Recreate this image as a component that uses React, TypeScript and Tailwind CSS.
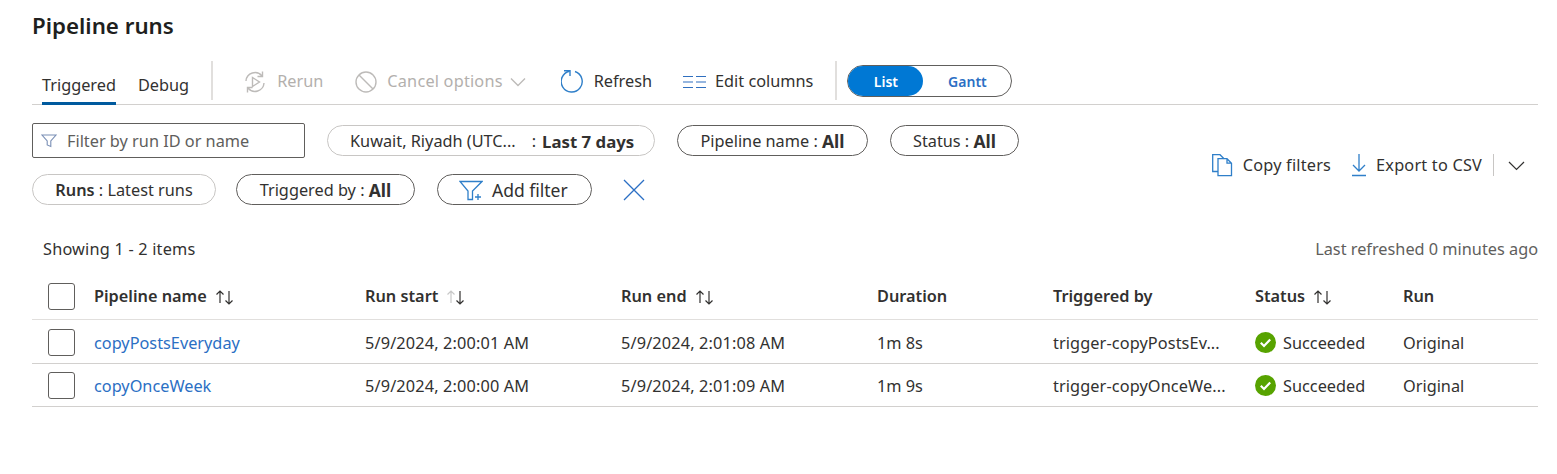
import React from 'react';

const font = { fontFamily: '"Noto Sans", "Open Sans", sans-serif' };

const SortIcon = ({ faded = false }: { faded?: boolean }) => (
  <svg className="ml-[7px]" width="22" height="18" viewBox="0 0 22 18" fill="none" strokeWidth="1.2">
    <path d="M6 15V3M2.5 6.5 6 3l3.5 3.5" stroke={faded ? '#c8c8c8' : '#323130'} />
    <path d="M15 3v13M11.5 12.5 15 16l3.5-3.5" stroke="#323130" />
  </svg>
);

const Pill = ({ children, light = false, className = '' }: { children: React.ReactNode; light?: boolean; className?: string }) => (
  <div
    className={`flex h-[31px] items-center rounded-full border bg-white pt-[2px] text-[16.3px] text-[#323130] ${
      light ? 'border-[#c8c6c4]' : 'border-[#605e5c]'
    } ${className}`}>
    {children}
  </div>
);

const Check = () => <div className="h-[27px] w-[27px] rounded-[3px] border border-[#605e5c] bg-white" />;

const SuccessIcon = () => (
  <svg width="21" height="21" viewBox="0 0 21 21">
    <circle cx="10.5" cy="10.5" r="10.5" fill="#57a300" />
    <path d="M5.8 10.8 9 14l6.2-6.6" fill="none" stroke="#fff" strokeWidth="2.2" />
  </svg>
);

const gridCols = 'grid grid-cols-[46px_271px_256px_256px_176px_202px_148px_135px] items-center pl-[16px]';

const runs = [
  { name: 'copyPostsEveryday', start: '5/9/2024, 2:00:01 AM', end: '5/9/2024, 2:01:08 AM', duration: '1m 8s', by: 'trigger-copyPostsEv...' },
  { name: 'copyOnceWeek', start: '5/9/2024, 2:00:00 AM', end: '5/9/2024, 2:01:09 AM', duration: '1m 9s', by: 'trigger-copyOnceWe...' }
];

const App = () => {
  return (
    <div className="h-[474px] w-[1557px] overflow-hidden bg-white pl-[32px] pr-[19px] text-[#323130]" style={font}>
      <h1 className="pt-[9px] text-[22.3px] font-semibold leading-[34px] text-[#201f1e]">Pipeline runs</h1>

      <div className="mt-[17px] flex h-[45px] items-stretch border-b border-[#d2d0ce] text-[16.3px]">
        <div className="flex items-end">
          <div className="-mb-px ml-[10px] flex h-[33px] items-center border-b-[3px] border-[#005a9e] pb-[4px] leading-none">
            Triggered
          </div>
          <div className="ml-[22px] flex h-[33px] items-center pb-[4px] leading-none">Debug</div>
        </div>
        <div className="ml-[22px] mt-[1px] h-[39px] w-[2px] bg-[#e1dfdd]" />

        <div className="ml-[30px] flex items-center pb-[1px] text-[#b3b0ad]">
          <svg width="24" height="24" viewBox="0 0 24 24" fill="none" stroke="#bdbbb9" strokeWidth="1.4">
            <path d="M3 11a9 9 0 0 1 16-5M21 13a9 9 0 0 1-16 5" />
            <path d="M19.5 1.5V6.5H14.5M4.5 22.5V17.5H9.5" />
            <path d="M9.5 7.5v9l7-4.5z" />
          </svg>
          <span className="ml-[10px]">Rerun</span>
        </div>
        <div className="ml-[32px] flex items-center pb-[1px] text-[#b3b0ad]">
          <svg width="22" height="22" viewBox="0 0 22 22" fill="none" stroke="#bdbbb9" strokeWidth="1.4">
            <circle cx="11" cy="11" r="10" />
            <path d="M4 4l14 14" />
          </svg>
          <span className="ml-[10px] tracking-[0.2px]">Cancel options</span>
          <svg className="ml-[7px]" width="16" height="16" viewBox="0 0 16 16" fill="none" stroke="#bdbbb9" strokeWidth="1.4">
            <path d="M1 4.5 8 11.5l7-7" />
          </svg>
        </div>
        <div className="ml-[35px] flex items-center pb-[1px]">
          <svg width="23" height="24" viewBox="0 0 23 24" fill="none" stroke="#2f7fc9" strokeWidth="1.4">
            <path d="M14 1.5A10.5 10.5 0 1 1 8.5 1.2" />
            <path d="M3 .7H9V6" />
          </svg>
          <span className="ml-[10px]">Refresh</span>
        </div>
        <div className="ml-[31px] flex items-center pb-[1px]">
          <svg width="23" height="14" viewBox="0 0 23 14" fill="none" stroke="#2f6fbf" strokeWidth="1.2">
            <path d="M0 1.5h10M13 1.5h10M0 7h10M13 7h10M0 12.5h10M13 12.5h10" />
          </svg>
          <span className="ml-[9px]">Edit columns</span>
        </div>
        <div className="ml-[22px] mt-[1px] h-[39px] w-[2px] bg-[#e1dfdd]" />
        <div className="ml-[10px] mt-[5px] flex h-[32px] w-[165px] items-center rounded-full border border-[#605e5c] text-[14px] font-semibold">
          <div className="flex h-full w-[75px] items-center justify-center rounded-full bg-[#0078d4] text-white">List</div>
          <div className="flex-1 text-center text-[#2b6fc4]">Gantt</div>
        </div>
      </div>

      <div className="mt-[18px] flex items-center justify-between">
        <div className="flex flex-col gap-[16px]">
          <div className="flex items-center">
            <div className="flex h-[35px] w-[273px] items-center rounded-[2px] border border-[#605e5c] pl-[8px] text-[16.3px] text-[#605e5c]">
              <svg width="16" height="16" viewBox="0 0 16 16" fill="none" stroke="#7a8fb5" strokeWidth="1.1">
                <path d="M1 2h14L9.8 8v5.5l-3.6-1.5V8z" />
              </svg>
              <span className="ml-[10px] pt-[2px]">Filter by run ID or name</span>
            </div>
            <Pill light className="ml-[22px] w-[328px] pl-[22px]">
              <span>Kuwait, Riyadh (UTC...</span>
              <span className="ml-[16px]">:</span>
              <span className="ml-[6px] text-[16.8px] font-bold">Last 7 days</span>
            </Pill>
            <Pill className="ml-[22px] w-[191px] justify-center">
              <span>Pipeline name :&nbsp;</span>
              <span className="text-[17.5px] font-bold">All</span>
            </Pill>
            <Pill className="ml-[22px] w-[129px] justify-center">
              <span>Status :&nbsp;</span>
              <span className="text-[17.5px] font-bold">All</span>
            </Pill>
          </div>
          <div className="flex items-center">
            <Pill light className="w-[184px] justify-center">
              <span className="font-semibold">Runs</span>
              <span>&nbsp;: Latest runs</span>
            </Pill>
            <Pill className="ml-[20px] w-[179px] justify-center">
              <span>Triggered by :&nbsp;</span>
              <span className="text-[17.5px] font-bold">All</span>
            </Pill>
            <Pill className="ml-[22px] w-[155px] pl-[21px]">
              <svg className="-mt-[2px]" width="24" height="24" viewBox="0 0 24 24" fill="none" stroke="#2f7fc9" strokeWidth="1.3">
                <path d="M1 3.5H23L13.5 13V21.5H9V13Z" />
                <path d="M19 16v6M16 19h6" />
              </svg>
              <span className="ml-[9px] text-[17.5px]">Add filter</span>
            </Pill>
            <svg className="ml-[31px]" width="22" height="22" viewBox="0 0 22 22" fill="none" stroke="#2b6fc4" strokeWidth="1.3">
              <path d="M1 1l20 20M21 1 1 21" />
            </svg>
          </div>
        </div>

        <div className="flex items-center pt-[2px] text-[16.3px] tracking-[0.2px]">
          <svg width="21" height="23" viewBox="0 0 21 23" fill="none" stroke="#2f7fc9" strokeWidth="1.3">
            <path d="M6 17.5H.7V.7H8l4 4" />
            <path d="M6 4.7h9l4.5 4.5v12.5H6zM15 4.7v4.5h4.5" />
          </svg>
          <span className="ml-[10px]">Copy filters</span>
          <svg className="ml-[20px]" width="16" height="24" viewBox="0 0 16 24" fill="none" stroke="#2f7fc9" strokeWidth="1.3">
            <path d="M8 1v17M2 12l6 6 6-6M1 22.5h14" />
          </svg>
          <span className="ml-[9px]">Export to CSV</span>
          <div className="ml-[11px] h-[22px] w-px bg-[#c8c6c4]" />
          <svg className="ml-[14px] mr-[13px]" width="17" height="17" viewBox="0 0 17 17" fill="none" stroke="#323130" strokeWidth="1.2">
            <path d="M1 5l7.5 7.5L16 5" />
          </svg>
        </div>
      </div>

      <div className="mt-[32px] flex h-[24px] items-center justify-between pl-[11px] text-[16.3px]">
        <span className="tracking-[0.2px]">Showing 1 - 2 items</span>
        <span className="text-[#605e5c]">Last refreshed 0 minutes ago</span>
      </div>

      <div className={`${gridCols} mt-[13px] h-[46px] border-b border-[#e1dfdd] text-[16.3px] font-semibold`}>
        <Check />
        <div className="flex items-center">
          Pipeline name <SortIcon />
        </div>
        <div className="flex items-center">
          Run start <SortIcon faded />
        </div>
        <div className="flex items-center">
          Run end <SortIcon />
        </div>
        <div>Duration</div>
        <div>Triggered by</div>
        <div className="flex items-center">
          Status <SortIcon />
        </div>
        <div>Run</div>
      </div>

      {runs.map((run) => (
        <div key={run.name} className={`${gridCols} h-[43.5px] border-b border-[#d2d0ce] pt-[2px] text-[16.3px]`}>
          <Check />
          <a className="pt-[1px] text-[#2b6fc4]">{run.name}</a>
          <div className="pt-[1px] tracking-[0.15px]">{run.start}</div>
          <div className="pt-[1px] tracking-[0.15px]">{run.end}</div>
          <div className="pt-[1px]">{run.duration}</div>
          <div className="pt-[1px] tracking-[0.1px]">{run.by}</div>
          <div className="flex items-center">
            <SuccessIcon />
            <span className="ml-[7px] pt-[1px]">Succeeded</span>
          </div>
          <div className="pt-[1px]">Original</div>
        </div>
      ))}
    </div>
  );
};

export default App;
